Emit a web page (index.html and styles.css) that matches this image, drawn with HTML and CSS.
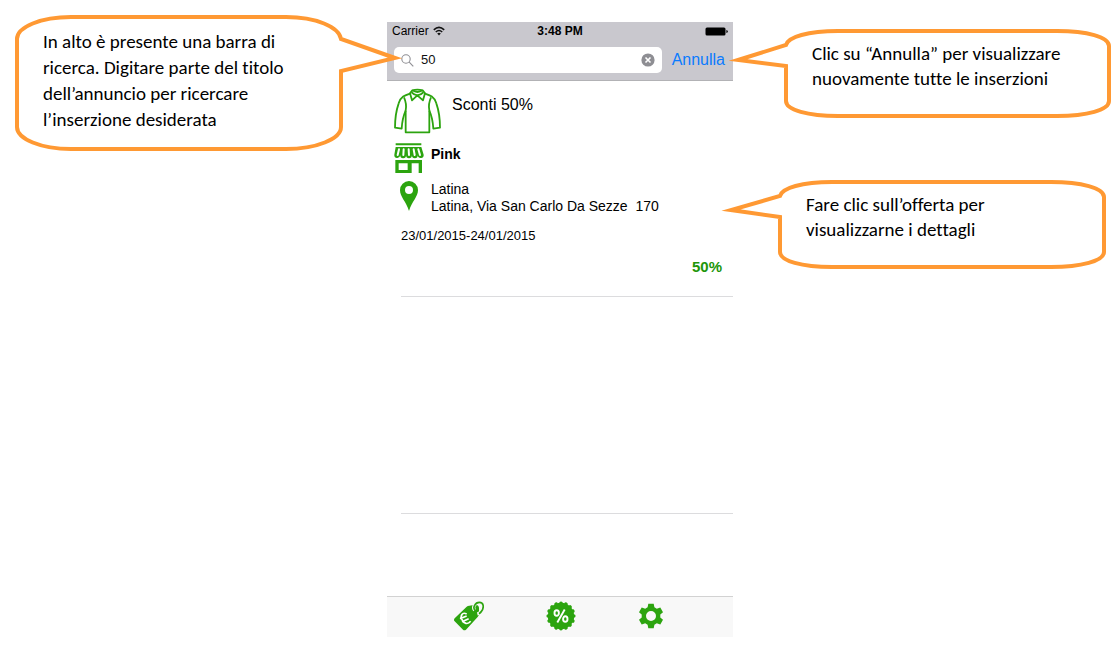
FILE: index.html
```html
<!DOCTYPE html>
<html lang="it">
<head>
<meta charset="utf-8">
<meta name="viewport" content="width=device-width, initial-scale=1">
<title>Ricerca inserzioni</title>
<link rel="stylesheet" href="styles.css">
</head>
<body>
<div class="page">
  <aside class="notes notes-left">
    <div class="callout callout-search">
      <svg class="bubble bubble-right" viewBox="0 0 390 136" width="390" height="136" aria-hidden="true"><path d="M56 2H271C301 2 324 12 326 24L380 43 326 56V112C326 124 301 134 271 134H56C26 134 2 124 2 112V24C2 12 26 2 56 2Z"/></svg>
      <p>In alto è presente una barra di<br>ricerca. Digitare parte del titolo<br>dell’annuncio per ricercare<br>l’inserzione desiderata</p>
    </div>
  </aside>

  <main class="phone">
    <header class="top">
      <div class="status">
        <span class="carrier">Carrier
          <svg viewBox="0 0 12 10" width="12" height="10" aria-hidden="true"><g fill="none" stroke="#111" stroke-width="1.6"><path d="M.8 3.8Q6-1 11.2 3.8"/><path d="M2.8 6Q6 3 9.2 6"/></g><path d="M4.2 7.4Q6 6 7.8 7.4L6 9.4Z" fill="#111"/></svg>
        </span>
        <span class="time">3:48 PM</span>
        <svg class="battery" viewBox="0 0 23 9" width="23" height="9" aria-hidden="true"><rect x=".5" y=".5" width="20" height="8" rx="1.5"/><path d="M21.4 3Q22.8 3.4 22.8 4.5T21.4 6Z"/></svg>
      </div>
      <form class="search">
        <div class="field">
          <svg viewBox="0 0 13 13" width="13" height="13" aria-hidden="true"><g fill="none" stroke="#8e8e93" stroke-width="1.1"><circle cx="5" cy="5" r="4.2"/><path d="M8.2 8.2 12.3 12.3"/></g></svg>
          <input class="query" type="text" value="50" aria-label="Cerca">
          <button class="clear" type="button" aria-label="Cancella testo"><svg viewBox="0 0 14 14" width="14" height="14" aria-hidden="true"><circle cx="7" cy="7" r="6.6" fill="#8e8e93"/><path d="M4.5 4.5 9.5 9.5M9.5 4.5 4.5 9.5" stroke="#fff" stroke-width="1.6"/></svg></button>
        </div>
        <button class="cancel" type="button">Annulla</button>
      </form>
    </header>

    <section class="list">
      <article class="offer">
        <div class="line line-title">
          <svg viewBox="9 6 147 141" width="49" height="47" aria-hidden="true"><g fill="none" stroke="#2ca40f" stroke-width="5.4" stroke-linejoin="round"><path d="M62 22C44 28 32 32 26 52Q15 84 15 125L35 128Q37 96 47 74"/><path d="M42 34Q51 54 47 74V139H118V74Q114 54 123 34"/><path d="M103 22C121 28 133 32 139 52Q150 84 150 125L130 128Q128 96 118 74"/><path d="M67 13Q82 9 98 13L105 22 99 43 82 28 66 43 60 22Z"/><path d="M67 13Q82 23 98 13M65 19Q72 27 82 28 93 27 100 19"/></g></svg>
          <h1>Sconti 50%</h1>
        </div>
        <div class="line line-shop">
          <svg viewBox="28 190 90 90" width="30" height="30" aria-hidden="true"><g fill="#2ca40f"><path d="M33 191H110V197H33ZM33 202H110L117 225A8.8 9 0 0 1 99.4 227 8.8 9 0 0 1 81.8 227 8.8 9 0 0 1 64.2 227 8.8 9 0 0 1 46.6 227 8.8 9 0 0 1 29 225Z"/><path fill-rule="evenodd" d="M32 241H112V280H102V251H81V280H32ZM42 251V271H69V251Z"/></g><path d="M43 209 39 226M57 209 56 226M72 209 73 226M87 209 90 226M101 209 106 226" fill="none" stroke="#fff" stroke-width="6" stroke-linecap="round"/></svg>
          <strong>Pink</strong>
        </div>
        <div class="line line-place">
          <svg viewBox="0 0 18 30" width="18" height="30" aria-hidden="true"><path d="M9 0A9 9 0 0 1 18 9C18 16 12 20 9 30C6 20 0 16 0 9A9 9 0 0 1 9 0ZM9 5A4 4 0 1 0 9 13A4 4 0 1 0 9 5Z" fill="#2ca40f" fill-rule="evenodd"/></svg>
          <p>Latina<br>Latina, Via San Carlo Da Sezze&nbsp; 170</p>
        </div>
        <p class="dates">23/01/2015-24/01/2015</p>
        <p class="discount">50%</p>
      </article>
      <div class="empty-row"></div>
    </section>

    <nav class="tabs">
      <a href="#offerte" aria-label="Offerte"><svg viewBox="42 34 90 90" width="30" height="30" aria-hidden="true"><path d="M44 86 80 51Q83 48 88 48L106 45Q116 45 117 54L117 72Q117 78 113 82L78 120Q73 124 69 120L44 95Q40 91 44 86Z" fill="#2ca40f"/><path d="M104 62C96 52 106 38 118 38 132 38 132 54 125 64Q120 71 112 73" fill="none" stroke="#f8f8f8" stroke-width="10"/><path d="M106 63C96 54 106 38 118 38 132 38 132 54 125 64Q122 69 117 72" fill="none" stroke="#2ca40f" stroke-width="5"/><path d="M80 73C67 66 60 78 66 90 71 102 83 106 92 95M60 87 80 79M66 96 86 87" fill="none" stroke="#fff" stroke-width="5"/></svg></a>
      <a href="#sconti" aria-label="Sconti"><svg viewBox="-15 -15 30 30" width="30" height="30" aria-hidden="true"><circle r="13.2" fill="#2ca40f"/><circle r="12.8" fill="none" stroke="#2ca40f" stroke-width="3.6" stroke-linecap="round" pathLength="160" stroke-dasharray="0.1 9.9"/><g fill="none" stroke="#fff" stroke-width="1.9"><ellipse cx="-4.3" cy="-3" rx="2.2" ry="2.8"/><ellipse cx="4.3" cy="3" rx="2.2" ry="2.8"/><path d="M3.7-6.4-3.7 6.4"/></g></svg></a>
      <a href="#impostazioni" aria-label="Impostazioni"><svg viewBox="-13 -13 26 26" width="26" height="26" aria-hidden="true"><path fill="#2ca40f" fill-rule="evenodd" d="M-2.7-12.2H2.7L3.4-8.7 5.8-7.3 9.3-8.6 12-3.7 9.3-1.4V1.4L12 3.7 9.3 8.6 5.8 7.3 3.4 8.7 2.7 12.2H-2.7L-3.4 8.7-5.8 7.3-9.3 8.6-12 3.7-9.3 1.4V-1.4L-12-3.7-9.3-8.6-5.8-7.3-3.4-8.7ZM0-5A5 5 0 1 0 0 5 5 5 0 1 0 0-5Z"/></svg></a>
    </nav>
  </main>

  <aside class="notes notes-right">
    <div class="callout callout-cancel">
      <svg class="bubble bubble-left" viewBox="0 0 387 89" width="387" height="89" aria-hidden="true"><path d="M112 2H331C361 2 383 8 383 17V72C383 81 361 87 331 87H112C82 87 60 81 60 72V37L12 31 60 16C62 8 82 2 112 2Z"/></svg>
      <p>Clic su “Annulla” per visualizzare<br>nuovamente tutte le inserzioni</p>
    </div>
    <div class="callout callout-offer">
      <svg class="bubble bubble-left" viewBox="0 0 387 89" width="387" height="89" aria-hidden="true"><path d="M112 2H331C361 2 384 8 384 17V72C384 81 361 87 331 87H112C82 87 60 81 60 72V37L11 30 60 16C62 8 82 2 112 2Z"/></svg>
      <p>Fare clic sull’offerta per<br>visualizzarne i dettagli</p>
    </div>
  </aside>
</div>
</body>
</html>
```
FILE: styles.css
```css
* { box-sizing: border-box; }

body {
  margin: 0;
  background: #fff;
  color: #000;
  font-family: "Liberation Sans", Arial, sans-serif;
}

h1, p { margin: 0; }
svg { display: block; flex: none; }
button { padding: 0; border: 0; background: none; font: inherit; }

.page {
  display: grid;
  grid-template-columns: 387fr 346fr 387fr;
  align-items: start;
}

/* explanatory balloons */
.notes {
  position: relative;
  z-index: 1;
  display: flex;
  flex-direction: column;
}
.notes-left { padding: 15px 44px 0 15px; }
.notes-right { padding: 29px 9px 0 51px; gap: 62px; }

.callout {
  position: relative;
  font: 19px/26px Carlito, Calibri, Lato, sans-serif;
  font-variant-ligatures: none;
  white-space: nowrap;
}
.callout p { position: relative; }
.callout-search { min-height: 136px; padding: 14px 28px; }
.callout-cancel,
.callout-offer { min-height: 89px; padding: 12px 28px; line-height: 25px; }
.callout-offer { margin-left: -6px; }

.bubble { position: absolute; top: 0; }
.bubble-right { left: 0; }
.bubble-left { left: -58px; }
.bubble path {
  fill: #fff;
  stroke: #ff9933;
  stroke-width: 4;
  stroke-miterlimit: 10;
}

/* phone */
.phone {
  display: flex;
  flex-direction: column;
  margin-top: 22px;
}

.top {
  height: 59px;
  border-bottom: 1px solid #b2b2b5;
  background: #c9c8ce;
}
.status {
  display: grid;
  grid-template-columns: 1fr auto 1fr;
  align-items: center;
  height: 18px;
  padding: 0 5px;
  font-size: 12px;
}
.carrier { display: flex; align-items: center; gap: 4px; }
.time { font-weight: bold; }
.battery { justify-self: end; }

.search {
  display: flex;
  align-items: center;
  gap: 10px;
  padding: 7px 8px 0 7px;
}
.field {
  display: flex;
  flex: 1;
  align-items: center;
  gap: 7px;
  min-width: 0;
  height: 26px;
  padding: 0 7px;
  border-radius: 5px;
  background: #fff;
}
.query {
  flex: 1;
  min-width: 0;
  padding: 0;
  border: 0;
  outline: 0;
  background: none;
  color: #111;
  font: 13px/20px "Liberation Sans", Arial, sans-serif;
}
.cancel { color: #0a7bff; font-size: 16px; }

.offer {
  height: 216px;
  margin-left: 14px;
  padding-top: 7px;
  border-bottom: 1px solid #dcdcde;
}
.line { display: flex; margin-left: -7px; }
.line-title { gap: 10px; margin-left: -8px; }
.line-title h1 { padding-top: 7px; font-size: 16px; font-weight: normal; line-height: 20px; }
.line-shop { gap: 7px; padding-top: 8px; font-size: 14px; line-height: 22px; }
.line-place { gap: 13px; margin-left: -1px; padding-top: 8px; }
.line-place p { font-size: 14px; line-height: 17px; }
.dates { padding-top: 12px; font-size: 13px; line-height: 18px; }
.discount {
  padding: 12px 11px 0 0;
  color: #219608;
  font-size: 15px;
  font-weight: bold;
  line-height: 20px;
  text-align: right;
}
.empty-row {
  height: 217px;
  margin-left: 14px;
  border-bottom: 1px solid #dcdcde;
}

.tabs {
  display: flex;
  align-items: center;
  justify-content: center;
  gap: 62px;
  height: 41px;
  margin-top: 82px;
  padding: 0 3px 2px 0;
  border-top: 1px solid #d2d2d2;
  background: #f8f8f8;
}
```
